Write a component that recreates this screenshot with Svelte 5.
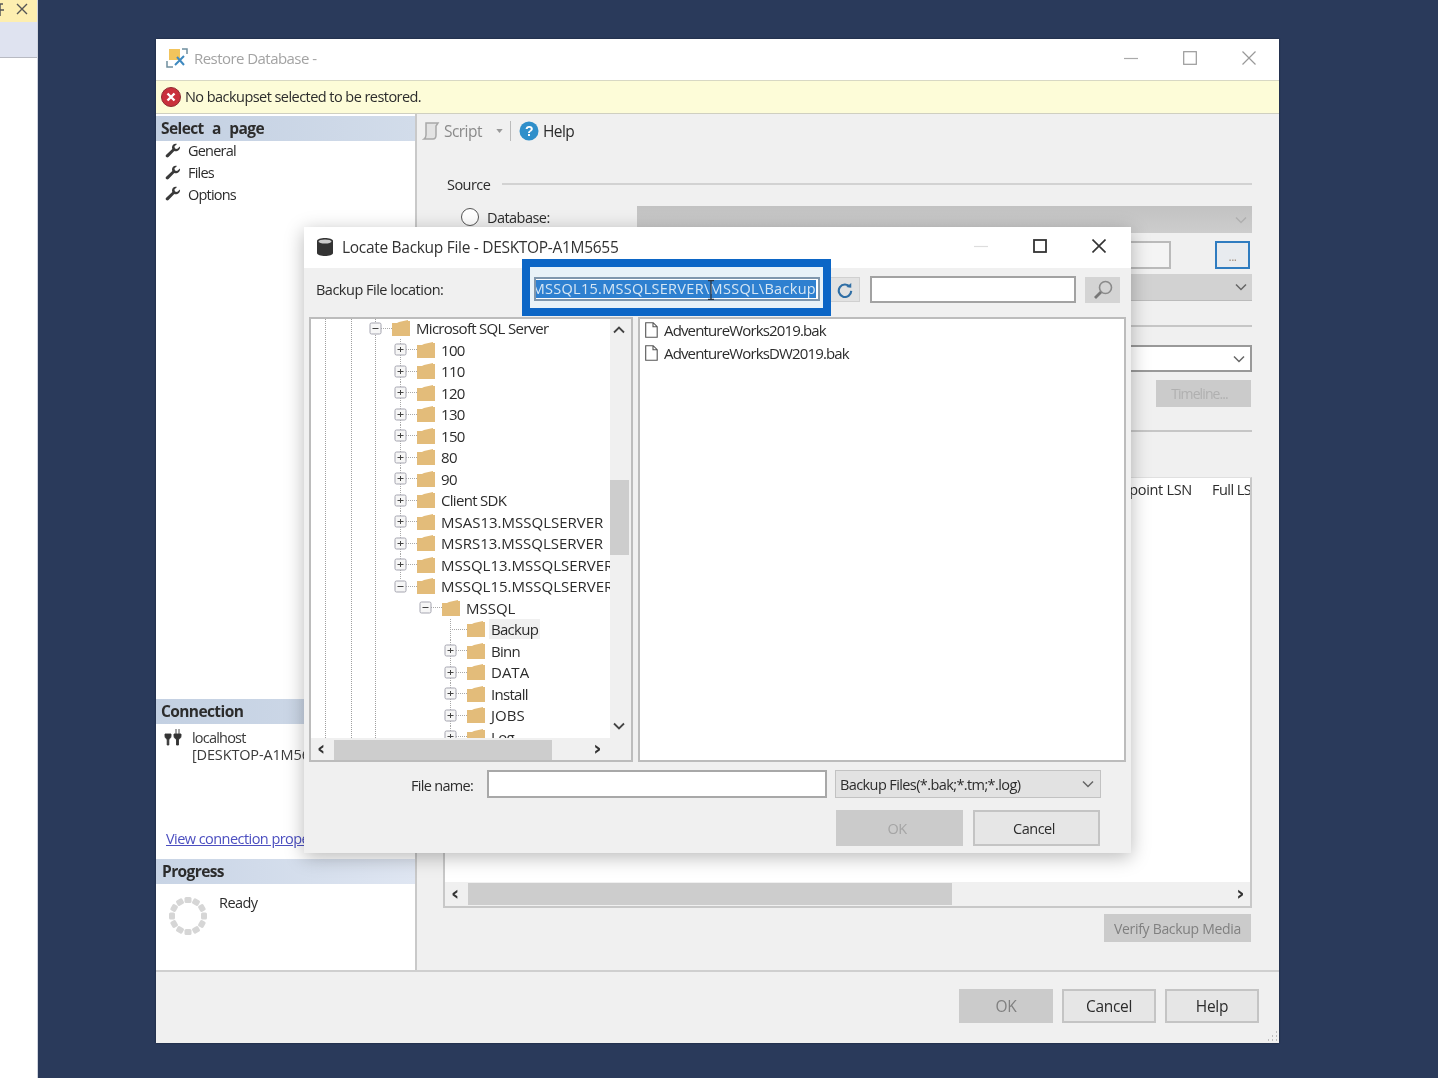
<script>
  const pages = ['General', 'Files', 'Options'];

  // level, label, expander ('plus', 'minus' or '')
  const tree = [
    [0, 'Microsoft SQL Server', 'minus'],
    [1, '100', 'plus'],
    [1, '110', 'plus'],
    [1, '120', 'plus'],
    [1, '130', 'plus'],
    [1, '150', 'plus'],
    [1, '80', 'plus'],
    [1, '90', 'plus'],
    [1, 'Client SDK', 'plus'],
    [1, 'MSAS13.MSSQLSERVER', 'plus'],
    [1, 'MSRS13.MSSQLSERVER', 'plus'],
    [1, 'MSSQL13.MSSQLSERVER', 'plus'],
    [1, 'MSSQL15.MSSQLSERVER', 'minus'],
    [2, 'MSSQL', 'minus'],
    [3, 'Backup', ''],
    [3, 'Binn', 'plus'],
    [3, 'DATA', 'plus'],
    [3, 'Install', 'plus'],
    [3, 'JOBS', 'plus'],
    [3, 'Log', 'plus']
  ];

  const files = ['AdventureWorks2019.bak', 'AdventureWorksDW2019.bak'];
  const spinner = Array.from({ length: 12 }, (_, i) => i * 30);

  const isCaps = (label) => label.length > 3 && label === label.toUpperCase();
</script>

{#snippet chevron()}
  <svg class="chev" viewBox="0 0 12 8" width="12" height="8"><path d="M1 1.500l5 5 5-5" fill="none" stroke="#666" stroke-width="1.500" /></svg>
{/snippet}

{#snippet wrench()}
  <svg viewBox="0 0 16 16" width="16" height="16"><path d="M15 3.500l-3 2.600-2-.5-.6-2L12 1c-2.600-.8-5 .9-5 3.400 0 .6.100 1 .3 1.500L1.200 11.800c-.8.800-.6 1.700 0 2.300.7.600 1.600.7 2.300 0l5.800-6c2.900.8 6.200-1.300 5.700-4.600z" fill="#3a3a3a" /></svg>
{/snippet}

<div class="desktop">
  <div class="strip">
    <div class="strip-tab">
      <svg viewBox="0 0 10 14" width="10" height="14"><path d="M0 2h6M3 2v8M0 8h7M3 10v4" stroke="#555" stroke-width="1.500" fill="none" /></svg>
      <svg viewBox="0 0 12 12" width="12" height="12"><path d="M1 1l10 10M11 1L1 11" stroke="#555" stroke-width="1.400" /></svg>
    </div>
    <div class="strip-sub"></div>
  </div>

  <section class="restore">
    <header class="titlebar">
      <svg class="app-icon" viewBox="0 0 22 22" width="22" height="22">
        <rect x="3" y="2" width="11" height="11" fill="#f2c45c" />
        <path d="M16 2h5v5M1 14v6h6" fill="none" stroke="#6f8f9e" stroke-width="1.500" />
        <path d="M9 18l9-9M11 10l7 8" stroke="#3f8ac0" stroke-width="2" />
      </svg>
      <span class="title-text">Restore Database -</span>
      <div class="win-btns pale">
        <svg viewBox="0 0 14 14" width="14" height="14"><path d="M0 7.500h14" stroke="#aaa" stroke-width="1.200" /></svg>
        <svg viewBox="0 0 14 14" width="14" height="14"><rect x=".7" y=".7" width="12.600" height="12.600" fill="none" stroke="#999" stroke-width="1.200" /></svg>
        <svg viewBox="0 0 14 14" width="14" height="14"><path d="M.5.500l13 13M13.500.500l-13 13" stroke="#999" stroke-width="1.200" /></svg>
      </div>
    </header>

    <div class="errorbar">
      <svg viewBox="0 0 20 20" width="20" height="20">
        <circle cx="10" cy="10" r="9.500" fill="#c9303c" stroke="#8f2b33" />
        <path d="M6.500 6.500l7 7M13.500 6.500l-7 7" stroke="#fff" stroke-width="2.400" />
      </svg>
      <span>No backupset selected to be restored.</span>
    </div>

    <div class="main">
      <aside class="sidebar">
        <h3 class="side-head select-head">Select a page</h3>
        <ul class="pages">
          {#each pages as page}
            <li>{@render wrench()}<span>{page}</span></li>
          {/each}
        </ul>

        <h3 class="side-head connection-head">Connection</h3>
        <div class="conn">
          <svg viewBox="0 0 18 18" width="18" height="18"><path d="M1 6h6v2c0 2-1.500 3-2.200 3v6H3.200v-6C2.500 11 1 10 1 8zM10 6h7v2c0 2-1.500 3-2.500 3v6h-2v-6C11.500 11 10 10 10 8zM12 1v5M15 1v5" fill="#333" stroke="#333" stroke-width=".9" /></svg>
          <div class="conn-text">localhost<br /><span>[DESKTOP-A1M5655\sa]</span></div>
        </div>
        <a class="conn-link" href="#top">View connection properties</a>

        <h3 class="side-head progress-head">Progress</h3>
        <div class="progress">
          <svg viewBox="0 0 40 40" width="40" height="40">
            {#each spinner as deg}
              <rect x="16.500" y="1" width="7" height="6" rx="1.500" fill="#d6d6d6" transform="rotate({deg} 20 20)" />
            {/each}
          </svg>
          <span>Ready</span>
        </div>
      </aside>

      <div class="content">
        <div class="toolbar">
          <svg viewBox="0 0 18 18" width="18" height="18"><path d="M4 1h12l-2 3v9c0 2-1 4-3 4H2c1.500-1 2-2 2-4z" fill="#e3e3e3" stroke="#a8a8a8" stroke-width="1.500" /></svg>
          <span class="muted">Script</span>
          <svg viewBox="0 0 8 5" width="7" height="4" class="caret"><path d="M0 0h8L4 5z" fill="#999" /></svg>
          <i class="tool-sep"></i>
          <svg viewBox="0 0 20 20" width="20" height="20">
            <circle cx="10" cy="10" r="9.500" fill="#2f8fca" />
            <text x="10" y="15" font-size="14" font-weight="700" text-anchor="middle" fill="#fff" font-family="Liberation Sans">?</text>
          </svg>
          <span>Help</span>
        </div>

        <div class="form">
          <div class="legend"><span>Source</span><i></i></div>

          <div class="db-row">
            <span class="radio"></span>
            <span class="db-label">Database:</span>
            <div class="combo dark">{@render chevron()}</div>
          </div>

          <div class="dev-row">
            <div class="dev-input"></div>
            <div class="dots">...</div>
          </div>

          <div class="combo grey">{@render chevron()}</div>
          <div class="rule first"></div>
          <div class="combo white">{@render chevron()}</div>
          <button class="timeline">Timeline...</button>
          <div class="rule second"></div>

          <div class="table">
            <div class="thead"><span class="th-a">point LSN</span><span class="th-b">Full LSN</span></div>
            <div class="tbody"></div>
            <div class="hscroll">
              <span class="arrow">‹</span>
              <i class="hthumb"></i>
              <span class="arrow right">›</span>
            </div>
          </div>

          <div class="verify-row"><button class="disabled verify">Verify Backup Media</button></div>
        </div>
      </div>
    </div>

    <footer class="actions">
      <button class="disabled">OK</button>
      <button>Cancel</button>
      <button>Help</button>
      <svg class="grip" viewBox="0 0 12 12" width="12" height="12"><path d="M10 2h1M10 6h1M6 6h1M10 10h1M6 10h1M2 10h1" stroke="#aaa" stroke-width="1.500" /></svg>
    </footer>
  </section>

  <section class="locate">
    <header class="loc-title">
      <svg viewBox="0 0 16 18" width="16" height="18"><path d="M0 3c0-4 16-4 16 0v12c0 4-16 4-16 0z" fill="#333" /><ellipse cx="8" cy="3.500" rx="6.500" ry="2" fill="#ccc" /></svg>
      <span>Locate Backup File - DESKTOP-A1M5655</span>
      <div class="win-btns dark-btns">
        <svg viewBox="0 0 14 14" width="14" height="14"><path d="M0 7.500h14" stroke="#ddd" stroke-width="1.200" /></svg>
        <svg viewBox="0 0 14 14" width="14" height="14"><rect x="1" y="1" width="12" height="12" fill="none" stroke="#333" stroke-width="1.800" /></svg>
        <svg viewBox="0 0 14 14" width="14" height="14"><path d="M.5.500l13 13M13.500.500l-13 13" stroke="#333" stroke-width="1.600" /></svg>
      </div>
    </header>

    <div class="loc-bar">
      <label for="loc-path">Backup File location:</label>
      <div class="callout">
        <div class="path" id="loc-path"><span>C:\Program Files\Microsoft SQL Server\MSSQL15.MSSQLSERVER\MSSQL\Backup</span></div>
        <svg class="ibeam" viewBox="0 0 8 20" width="8" height="20"><path d="M1 .7h6M1 19.300h6M4 .7v18.600" stroke="#2b3440" stroke-width="1.300" fill="none" /></svg>
      </div>
      <div class="refresh">
        <svg viewBox="0 0 18 18" width="16" height="16"><path d="M14.500 5.500A7 7 0 1 0 16 10" fill="none" stroke="#2f6ea5" stroke-width="2.400" /><path d="M10.500 5.500l5.500 1V1z" fill="#2f6ea5" /></svg>
      </div>
      <div class="search"></div>
      <div class="search-btn">
        <svg viewBox="0 0 20 20" width="20" height="20"><circle cx="12.500" cy="7.500" r="6" fill="none" stroke="#8a8a8a" stroke-width="1.600" /><path d="M8 12l-6 6" stroke="#777" stroke-width="2.800" /></svg>
      </div>
    </div>

    <div class="panes">
      <div class="tree">
        <div class="tree-view">
          <i class="guide g1"></i><i class="guide g2"></i><i class="guide g3"></i>
          {#each tree as [level, label, exp]}
            <div class="node" style="padding-left: {59 + level * 25}px">
              <svg class="exp" viewBox="0 0 23 21" width="23" height="21">
                {#if level === 1 || level === 3}
                  <path d="M6.500 0V{exp === 'minus' ? 4 : 21}" stroke="#a8a8a8" stroke-dasharray="1 1" />
                {/if}
                <path d="M{exp ? 12 : 6} 10.500h{exp ? 11 : 17}" stroke="#a8a8a8" stroke-dasharray="1 1" />
                {#if exp}
                  <rect x="1" y="5" width="11" height="11" rx="1.500" fill="#f6f6f6" stroke="#a5a5b0" />
                  <path d="M3.500 10.500h6" stroke="#444" />
                  {#if exp === 'plus'}<path d="M6.500 8v5" stroke="#444" />{/if}
                {/if}
              </svg>
              <svg class="folder" viewBox="0 0 18 16" width="18" height="16"><path d="M0 3h5l2-1h0l9-2v1h2v15H0z" fill="#e3bc7a" /></svg>
              <span class="node-label" class:current={label === 'Backup'} class:caps={isCaps(label)}>{label}</span>
            </div>
          {/each}
        </div>
        <div class="tree-vscroll">
          <svg viewBox="0 0 12 8" width="12" height="8"><path d="M1 6.500l5-5 5 5" fill="none" stroke="#444" stroke-width="1.800" /></svg>
          <i class="vthumb"></i>
          <svg viewBox="0 0 12 8" width="12" height="8"><path d="M1 1.500l5 5 5-5" fill="none" stroke="#444" stroke-width="1.800" /></svg>
        </div>
        <div class="tree-hscroll">
          <span class="arrow">‹</span>
          <i class="tree-hthumb"></i>
          <span class="arrow right">›</span>
        </div>
        <div class="tree-corner"></div>
      </div>

      <div class="filelist">
        {#each files as file}
          <div class="file">
            <svg viewBox="0 0 13 16" width="13" height="16"><path d="M.7.700h7.500l4 4v10.600H.7zM8 .7v4h4.200" fill="#fff" stroke="#555" stroke-width="1.100" /></svg>
            <span>{file}</span>
          </div>
        {/each}
      </div>
    </div>

    <div class="name-row">
      <span class="name-label">File name:</span>
      <div class="name-input"></div>
      <div class="filter"><span>Backup Files(*.bak;*.tm;*.log)</span>{@render chevron()}</div>
    </div>

    <div class="loc-actions">
      <button class="disabled faint">OK</button>
      <button>Cancel</button>
    </div>
  </section>
</div>

<style>
  :global(body) {
    margin: 0;
    background: #2a3a5b;
  }

  .desktop {
    position: relative;
    width: 1438px;
    height: 1078px;
    overflow: hidden;
    display: flex;
    background: #2a3a5b;
    font-family: "Open Sans", "Noto Sans", sans-serif;
    font-size: 14.5px;
    letter-spacing: -0.55px;
    color: #2c2c2c;
    filter: blur(0.55px);
  }

  .desktop * {
    box-sizing: border-box;
  }

  .strip {
    width: 38px;
    background: #fff;
    border-right: 1px solid #d0d4de;
  }

  .strip-tab {
    height: 22px;
    background: #fdeeb0;
    display: flex;
    justify-content: flex-end;
    align-items: center;
    gap: 9px;
    padding: 0 9px 5px 0;
    margin-left: -6px;
  }

  .strip-sub {
    height: 36px;
    background: #dfe3f0;
    border-bottom: 1px solid #b8bac2;
  }

  /* restore window */
  .restore {
    position: absolute;
    left: 156px;
    top: 39px;
    width: 1123px;
    height: 1004px;
    display: flex;
    flex-direction: column;
    background: #f0f0f0;
    box-shadow: 0 0 2px rgba(0, 0, 0, 0.4);
  }

  .titlebar {
    height: 41px;
    flex: none;
    background: #fff;
    display: flex;
    align-items: center;
    padding: 0 0 3px 10px;
  }

  .title-text {
    margin-left: 6px;
    color: #a3a3a3;
    font-size: 15px;
  }

  .win-btns {
    margin-left: auto;
    display: flex;
    gap: 45px;
    padding-right: 23px;
  }

  .errorbar {
    height: 34px;
    flex: none;
    background: #fdfcd8;
    border-top: 1px solid #d8d8c4;
    border-bottom: 1px solid #cfcfc0;
    display: flex;
    align-items: center;
    gap: 4px;
    padding: 0 0 1px 5px;
  }

  .main {
    flex: 1;
    min-height: 0;
    display: flex;
  }

  .sidebar {
    width: 261px;
    flex: none;
    background: #fff;
    border-right: 2px solid #c9c9c9;
    display: flex;
    flex-direction: column;
    overflow: hidden;
  }

  .side-head {
    margin: 2px 0 0;
    height: 25px;
    flex: none;
    padding-left: 5px;
    background: linear-gradient(90deg, #c3d0e2, #d2dcea);
    font-size: 15.500px;
    font-weight: 700;
    line-height: 25px;
    letter-spacing: -0.6px;
  }

  .select-head {
    word-spacing: 5px;
  }

  .pages {
    list-style: none;
    margin: -1px 0 0;
    padding: 0 0 0 9px;
    letter-spacing: -0.8px;
  }

  .pages li {
    height: 21.700px;
    display: flex;
    align-items: center;
    gap: 7px;
  }

  .connection-head {
    margin-top: auto;
  }

  .conn {
    margin-top: 4px;
    display: flex;
    gap: 11px;
    padding-left: 8px;
    height: 101px;
    white-space: nowrap;
    line-height: 17px;
  }

  .conn-text {
    margin-top: 1px;
    color: #3a3a3a;
    margin-left: -1px;
    letter-spacing: -0.8px;
  }

  .conn-text span {
    letter-spacing: -0.15px;
  }

  .conn-link {
    padding-left: 10px;
    height: 28px;
    color: #4c4fc0;
    white-space: nowrap;
  }

  .progress-head {
    margin-top: 2px;
    background: linear-gradient(90deg, #c8d4e5, #dfe6f2);
    padding-left: 6px;
  }

  .progress {
    height: 86px;
    flex: none;
    display: flex;
    padding: 12px 0 0 12px;
  }

  .progress span {
    margin: -3px 0 0 11px;
    line-height: 20px;
  }

  .content {
    flex: 1;
    min-width: 0;
    background: #f0f0f0;
  }

  .toolbar {
    height: 35px;
    display: flex;
    align-items: center;
    gap: 4px;
    padding: 0 0 2px 5px;
    font-size: 15.500px;
  }

  .muted {
    color: #8a8a8a;
  }

  .caret {
    margin-left: 10px;
  }

  .tool-sep {
    width: 1px;
    height: 20px;
    background: #bbb;
    margin: 0 4px 0 3px;
  }

  .form {
    padding: 0 27px 0 30px;
  }

  .legend {
    margin-top: 23px;
    height: 24px;
    display: flex;
    align-items: center;
    gap: 12px;
  }

  .legend i {
    flex: 1;
    height: 2px;
    background: #d2d2d2;
  }

  .db-row {
    margin-top: 10px;
    display: flex;
    align-items: center;
    padding-left: 14px;
  }

  .radio {
    width: 18px;
    height: 18px;
    margin-bottom: 5px;
    border: 1.500px solid #555;
    border-radius: 50%;
    background: #fff;
  }

  .db-label {
    margin: 0 0 5px 8px;
    width: 150px;
  }

  .combo {
    height: 27px;
    display: flex;
    align-items: center;
    justify-content: flex-end;
    padding-right: 5px;
  }

  .combo.dark {
    flex: 1;
    background: linear-gradient(#c2c2c2, #cdcdcd);
  }

  .combo.dark .chev {
    opacity: 0.25;
  }

  .combo.grey {
    margin-top: 5px;
    background: #d2d2d2;
    border-bottom: 1px solid #bbb;
  }

  .combo.white {
    margin-top: 18px;
    background: #fff;
    border: 2px solid #999;
  }

  .dev-row {
    margin-top: 8px;
    display: flex;
    align-items: center;
  }

  .dev-input {
    width: 724px;
    height: 28px;
    background: #f4f4f4;
    border: 2px solid #bababa;
  }

  .dots {
    margin-left: 44px;
    width: 35px;
    height: 28px;
    background: #e8ebef;
    border: 2px solid #2f7cc0;
    text-align: center;
    line-height: 28px;
    color: #a08f80;
    font-size: 12px;
  }

  .timeline {
    display: block;
    margin: 8px 1px 0 auto;
    width: 95px;
    height: 27px;
    background: #cbcbcb;
    border: 0;
    color: #b0b0b0;
    font: inherit;
    font-size: 14px;
    letter-spacing: -0.9px;
    padding-right: 8px;
  }

  .rule {
    height: 2px;
    background: #c6c6c6;
  }

  .rule.first {
    margin-top: 24px;
  }

  .rule.second {
    margin-top: 23px;
  }

  .table {
    margin: 45px 0 0 -4px;
    height: 431px;
    display: flex;
    flex-direction: column;
    background: #fff;
    border: 2px solid #c8c8c8;
    border-top: 1px solid #e0e0e0;
  }

  .thead {
    height: 24px;
    position: relative;
    flex: none;
    color: #2c2c2c;
    overflow: hidden;
    white-space: nowrap;
  }

  .th-a {
    position: absolute;
    right: 58px;
    top: 2px;
    letter-spacing: -0.3px;
  }

  .th-b {
    position: absolute;
    left: 767px;
    top: 2px;
  }

  .tbody {
    flex: 1;
  }

  .hscroll {
    height: 24px;
    flex: none;
    background: #f0f0f0;
    display: flex;
    align-items: center;
    position: relative;
    padding-left: 6px;
  }

  .arrow {
    font-family: "DejaVu Sans", sans-serif;
    font-size: 20px;
    font-weight: 700;
    line-height: 20px;
    margin-top: -3px;
    color: #333;
  }

  .arrow.right {
    margin-left: auto;
    margin-right: 6px;
  }

  .hthumb {
    margin-left: 9px;
    width: 484px;
    height: 22px;
    background: #cdcdcd;
  }

  .verify-row {
    margin-top: 6px;
    display: flex;
    justify-content: flex-end;
    padding-right: 1px;
  }

  button.verify {
    width: 147px;
    height: 28px;
    color: #a8a8a8;
    font-size: 14px;
    letter-spacing: -0.3px;
  }

  .actions {
    height: 73px;
    flex: none;
    border-top: 2px solid #cfcfcf;
    background: #f0f0f0;
    display: flex;
    justify-content: flex-end;
    gap: 9px;
    padding: 17px 20px 0 0;
    position: relative;
  }

  .grip {
    position: absolute;
    right: 1px;
    bottom: 1px;
  }

  button {
    width: 94px;
    height: 34px;
    background: #e6e6e6;
    border: 2px solid #c4c4c4;
    font: inherit;
    font-size: 15.500px;
    letter-spacing: -0.3px;
    color: #2c2c2c;
    padding: 0;
  }

  button.disabled {
    background: #cbcbcb;
    border-color: #cbcbcb;
    color: #808080;
  }

  /* locate dialog */
  .locate {
    position: absolute;
    left: 304px;
    top: 227px;
    width: 827px;
    height: 626px;
    background: #f0f0f0;
    display: flex;
    flex-direction: column;
    box-shadow: 0 4px 18px rgba(0, 0, 0, 0.28);
  }

  .loc-title {
    height: 41px;
    flex: none;
    background: #fff;
    display: flex;
    align-items: center;
    gap: 9px;
    padding: 0 0 2px 13px;
    font-size: 15.500px;
    letter-spacing: -0.3px;
    color: #333;
  }

  .dark-btns {
    gap: 45px;
    padding: 0 25px 2px 0;
  }

  .loc-bar {
    height: 49px;
    flex: none;
    position: relative;
    display: flex;
    align-items: center;
    padding-left: 12px;
  }

  .loc-bar label {
    width: 226px;
    flex: none;
    margin-top: -7px;
    letter-spacing: -0.5px;
  }

  .callout {
    position: absolute;
    left: 218px;
    top: -9px;
    width: 309px;
    height: 57px;
    background: #e8f2f8;
    border: 8px solid #0c66c6;
    z-index: 2;
    padding: 10px 0 0 4px;
  }

  .path {
    width: 286px;
    height: 24px;
    border: 2px solid #7f97ad;
    background: #fff;
    padding: 1px 2px;
    overflow: hidden;
    display: flex;
    justify-content: flex-end;
    white-space: nowrap;
  }

  .path span {
    background: #2e80d0;
    color: #d6e6f4;
    line-height: 18px;
    flex: none;
    letter-spacing: 0.3px;
  }

  .ibeam {
    position: absolute;
    left: 177px;
    top: 13px;
  }

  .refresh {
    position: absolute;
    left: 526px;
    top: 9px;
    width: 30px;
    height: 25px;
    background: #e2e2e2;
    border: 1px solid #d0d0d0;
    display: flex;
    align-items: center;
    justify-content: center;
  }

  .search {
    position: absolute;
    left: 566px;
    top: 8px;
    width: 206px;
    height: 27px;
    background: #fff;
    border: 2px solid #a2a2a2;
  }

  .search-btn {
    position: absolute;
    left: 781px;
    top: 9px;
    width: 35px;
    height: 26px;
    background: #d4d4d4;
    display: flex;
    align-items: center;
    justify-content: center;
  }

  .panes {
    height: 445px;
    flex: none;
    display: flex;
    gap: 5px;
    padding-left: 5px;
  }

  .tree {
    width: 324px;
    display: grid;
    grid-template-columns: 1fr 21px;
    grid-template-rows: 1fr 23px;
    background: #fff;
    border: 2px solid #bcbcbc;
    overflow: hidden;
  }

  .tree-view {
    position: relative;
    overflow: hidden;
    height: 419px;
  }

  .guide {
    position: absolute;
    top: 0;
    bottom: 0;
    width: 0;
    border-left: 1px dotted #a0a0a0;
  }

  .g1 { left: 14px; }
  .g2 { left: 40px; }
  .g3 { left: 64px; }

  .node {
    height: 21.500px;
    display: flex;
    align-items: center;
    white-space: nowrap;
    position: relative;
    font-size: 15px;
    letter-spacing: -0.7px;
  }

  .node:first-of-type {
    margin-top: -1.500px;
  }

  .exp {
    flex: none;
    margin-left: -1px;
  }

  .folder {
    flex: none;
    margin-right: 6px;
  }

  .node-label {
    padding: 0 2px;
    margin-left: -2px;
  }

  .node-label.caps {
    letter-spacing: 0;
  }

  .node-label.current {
    background: #f0f0f0;
  }

  .tree-vscroll {
    background: #f0f0f0;
    position: relative;
    display: flex;
    flex-direction: column;
    align-items: center;
    justify-content: space-between;
    padding: 7px 4px 8px 0;
    height: 419px;
  }

  .vthumb {
    position: absolute;
    top: 161px;
    left: 0;
    width: 19px;
    height: 75px;
    background: #cdcdcd;
  }

  .tree-hscroll {
    background: #f0f0f0;
    display: flex;
    align-items: center;
    padding-left: 6px;
  }

  .tree-hscroll .arrow.right {
    margin-right: 9px;
  }

  .tree-corner {
    background: #f0f0f0;
  }

  .tree-hthumb {
    margin-left: 9px;
    width: 218px;
    height: 20px;
    background: #cdcdcd;
  }

  .filelist {
    width: 488px;
    background: #fff;
    border: 2px solid #bcbcbc;
    padding: 0 0 0 5px;
  }

  .file {
    height: 23px;
    display: flex;
    align-items: center;
    gap: 6px;
    font-size: 15px;
    letter-spacing: -0.85px;
  }

  .file:first-child {
    margin-top: -1px;
  }

  .name-row {
    margin-top: 8px;
    height: 28px;
    flex: none;
    display: flex;
    align-items: center;
  }

  .name-label {
    margin-left: 107px;
    width: 76px;
    margin-top: 2px;
    letter-spacing: -0.7px;
  }

  .name-input {
    width: 340px;
    height: 28px;
    background: #fff;
    border: 2px solid #a8a8a8;
  }

  .filter {
    margin-left: 8px;
    width: 266px;
    height: 28px;
    background: #e2e2e2;
    border: 1px solid #c2c2c2;
    display: flex;
    align-items: center;
    justify-content: space-between;
    padding: 0 6px 0 4px;
    letter-spacing: -0.6px;
  }

  .loc-actions {
    margin-top: 12px;
    display: flex;
    gap: 10px;
    padding-left: 532px;
  }

  .loc-actions button {
    width: 127px;
    height: 36px;
    font-size: 14.500px;
    letter-spacing: -0.5px;
    padding-right: 5px;
  }

  .loc-actions .faint {
    color: #a5a5a5;
  }
</style>
